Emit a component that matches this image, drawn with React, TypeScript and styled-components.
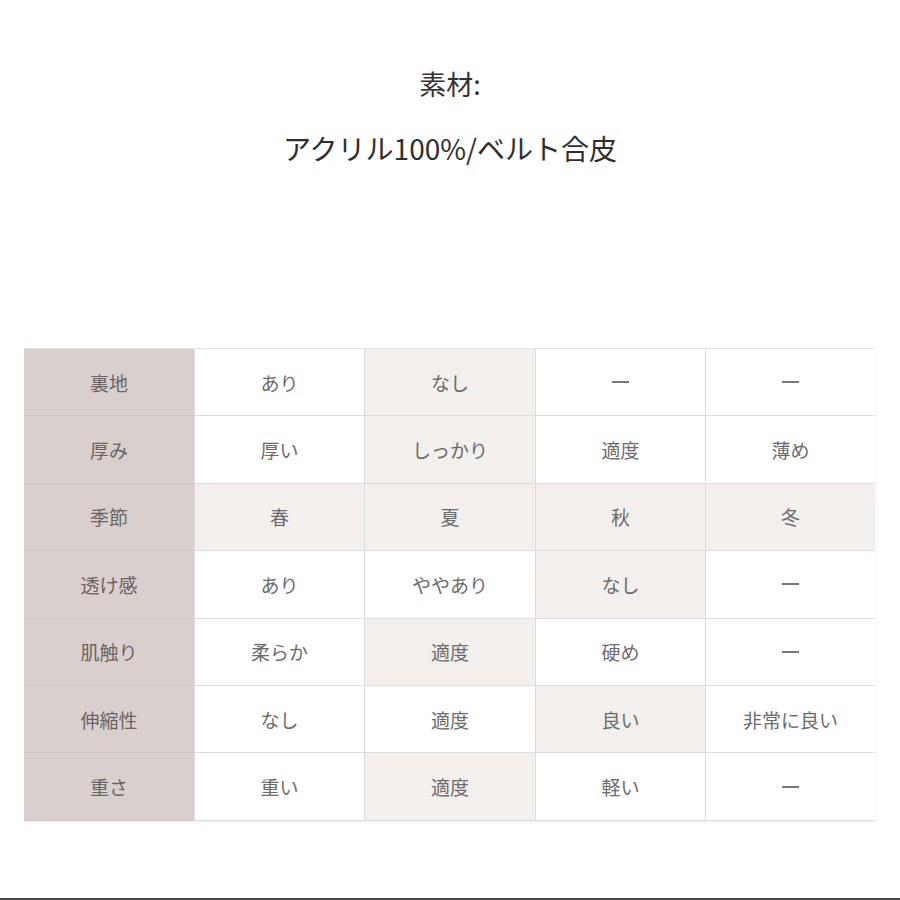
import React from "react";
import styled, { createGlobalStyle } from "styled-components";

const GlobalStyle = createGlobalStyle`
  html, body {
    margin: 0;
    padding: 0;
    background: #ffffff;
  }
  body {
    font-family: "Noto Sans CJK JP", "Noto Sans", sans-serif;
  }
`;

const Page = styled.div`
  width: 900px;
  height: 900px;
  display: flex;
  flex-direction: column;
  box-sizing: border-box;
  padding-top: 64px;
  border-bottom: 2px solid #4a4a4a;
`;

const Heading = styled.div`
  text-align: center;
  font-size: 27px;
  line-height: 40px;
  color: #333333;
`;

const Material = styled.div`
  margin-top: 24px;
  text-align: center;
  font-size: 28px;
  line-height: 40px;
  color: #2e2e2e;
`;

const Table = styled.div`
  margin: 180px 0 0 24px;
  display: grid;
  grid-template-columns: 170px 170px 171px 170px 170px;
  grid-auto-rows: 67.4px;
  width: 851px;
  border-top: 1px solid #e4e1df;
  box-shadow: 1px 2px 3px rgba(0, 0, 0, 0.05);
`;

const LabelCell = styled.div`
  display: flex;
  align-items: center;
  justify-content: center;
  box-sizing: border-box;
  background: #d9d0ce;
  border-bottom: 1px solid #cfc5c3;
  font-size: 19px;
  color: #6a6464;
`;

const Cell = styled.div<{ $tinted?: boolean }>`
  display: flex;
  align-items: center;
  justify-content: center;
  box-sizing: border-box;
  background: ${(p) => (p.$tinted ? "#f2efec" : "#ffffff")};
  border-bottom: 1px solid #dcdcdc;
  border-left: 1px solid #dcdcdc;
  font-size: 19px;
  color: #6b6b6b;
`;

const Dash = styled.span`
  display: inline-block;
  width: 17px;
  height: 2px;
  background: #777777;
`;

type Row = { label: string; values: string[]; tint: number[] };

const rows: Row[] = [
  { label: "裏地", values: ["あり", "なし", "ー", "ー"], tint: [1] },
  { label: "厚み", values: ["厚い", "しっかり", "適度", "薄め"], tint: [1] },
  { label: "季節", values: ["春", "夏", "秋", "冬"], tint: [0, 1, 2, 3] },
  { label: "透け感", values: ["あり", "ややあり", "なし", "ー"], tint: [2] },
  { label: "肌触り", values: ["柔らか", "適度", "硬め", "ー"], tint: [1] },
  { label: "伸縮性", values: ["なし", "適度", "良い", "非常に良い"], tint: [2] },
  { label: "重さ", values: ["重い", "適度", "軽い", "ー"], tint: [1] },
];

export default function App() {
  return (
    <>
      <GlobalStyle />
      <Page>
        <Heading>素材:</Heading>
        <Material>アクリル100%/ベルト合皮</Material>
        <Table>
          {rows.map((row) => (
            <React.Fragment key={row.label}>
              <LabelCell>{row.label}</LabelCell>
              {row.values.map((v, i) => (
                <Cell key={i} $tinted={row.tint.includes(i)}>
                  {v === "ー" ? <Dash aria-label="ー" /> : v}
                </Cell>
              ))}
            </React.Fragment>
          ))}
        </Table>
      </Page>
    </>
  );
}
